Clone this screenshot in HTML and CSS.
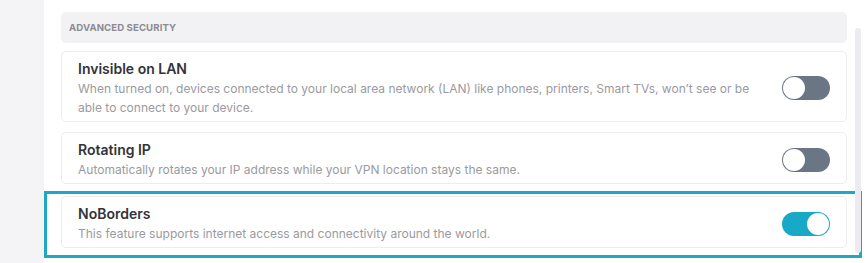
FILE: index.html
```html
<!DOCTYPE html>
<html lang="en">
<head>
<meta charset="utf-8">
<title>Advanced Security</title>
<link rel="stylesheet" href="styles.css">
</head>
<body>
<div class="app">
  <aside class="sidebar"></aside>
  <main class="main">
    <section class="section">
      <div class="section-header">ADVANCED SECURITY</div>
      <div class="list">
        <div class="card">
          <div class="text">
            <div class="title">Invisible on LAN</div>
            <div class="desc">When turned on, devices connected to your local area network (LAN) like phones, printers, Smart TVs, won’t see or be able to connect to your device.</div>
          </div>
          <div class="toggle"><span class="knob"></span></div>
        </div>
        <div class="card">
          <div class="text">
            <div class="title">Rotating IP</div>
            <div class="desc">Automatically rotates your IP address while your VPN location stays the same.</div>
          </div>
          <div class="toggle"><span class="knob"></span></div>
        </div>
        <div class="card card-highlight">
          <div class="text">
            <div class="title">NoBorders</div>
            <div class="desc">This feature supports internet access and connectivity around the world.</div>
          </div>
          <div class="toggle toggle-on"><span class="knob"></span></div>
        </div>
      </div>
    </section>
    <div class="scrollbar"></div>
  </main>
</div>
</body>
</html>
```

FILE: styles.css
```css
* { box-sizing: border-box; }

html, body {
  margin: 0;
  padding: 0;
  background: #ffffff;
  height: 263px;
  overflow: hidden;
}

body {
  font-family: Inter, "Noto Sans", "Liberation Sans", sans-serif;
  color: #2f2f34;
}

.app {
  display: flex;
  height: 263px;
}

.sidebar {
  width: 44px;
  flex: none;
  background: #f4f4f7;
}

.main {
  position: relative;
  flex: 1;
  padding: 12px 0 0 17px;
}

.section {
  width: 786px;
}

.section-header {
  height: 31px;
  background: #f2f2f5;
  border-radius: 5px;
  padding-left: 8px;
  display: flex;
  align-items: center;
  font-size: 9.6px;
  font-weight: 700;
  color: #8b8b91;
  letter-spacing: 0.1px;
}

.list {
  margin-top: 8px;
  display: flex;
  flex-direction: column;
  gap: 10px;
}

.card {
  position: relative;
  display: flex;
  align-items: center;
  justify-content: space-between;
  border: 1px solid #ededf0;
  border-radius: 5px;
  padding: 7px 16px 4px 16px;
  background: #ffffff;
}

.card-highlight {
  margin-top: 2px;
}

.card-highlight::after {
  content: "";
  position: absolute;
  left: -18px;
  top: -6px;
  right: -16px;
  bottom: -11px;
  border: 3px solid #21a8c1;
  pointer-events: none;
}

.text {
  max-width: 685px;
}

.title {
  font-size: 14px;
  line-height: 20px;
  font-weight: 600;
  color: #333338;
}

.desc {
  font-size: 12px;
  line-height: 19px;
  color: #9a9aa0;
}

.toggle {
  position: relative;
  flex: none;
  width: 48px;
  height: 24px;
  border-radius: 12px;
  background: #6b7684;
}

.knob {
  position: absolute;
  top: 1px;
  left: 1px;
  width: 22px;
  height: 22px;
  border-radius: 50%;
  background: #ffffff;
}

.toggle-on {
  background: #17a9c5;
}

.toggle-on .knob {
  left: 25px;
}

.scrollbar {
  position: absolute;
  left: 811px;
  top: 28px;
  width: 6px;
  height: 225px;
  border-radius: 3px;
  background: #ebebf1;
}
```
